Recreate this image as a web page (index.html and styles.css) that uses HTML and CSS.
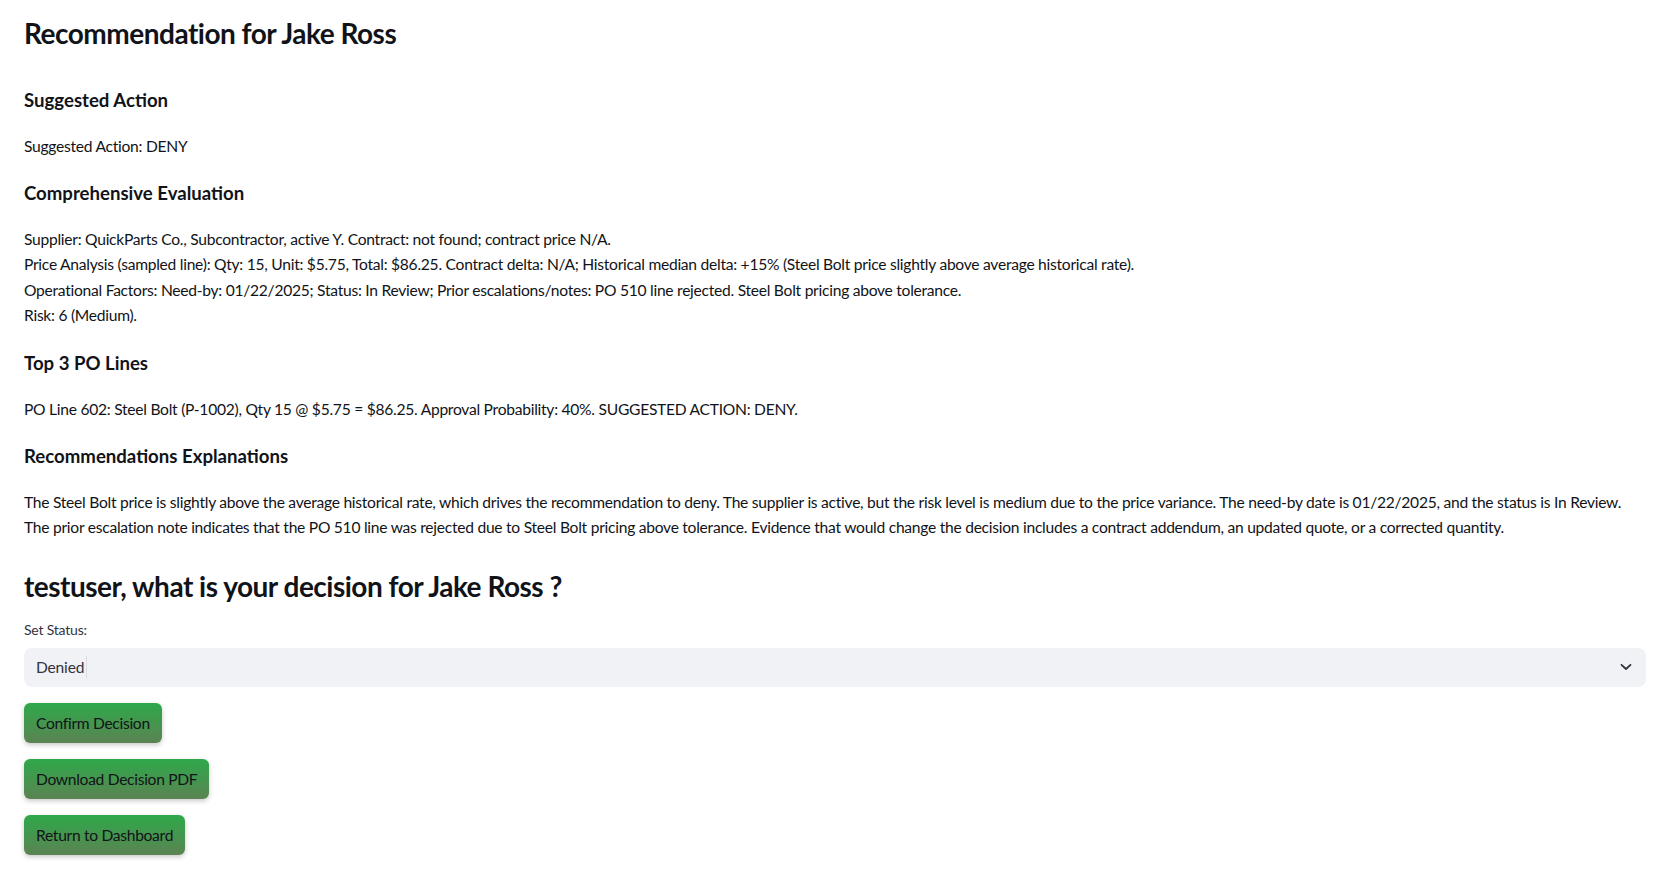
FILE: index.html
```html
<!DOCTYPE html>
<html lang="en">
<head>
<meta charset="utf-8">
<title>Recommendation for Jake Ross</title>
<link rel="stylesheet" href="styles.css">
</head>
<body>
<main class="page">
  <h2 class="title">Recommendation for Jake Ross</h2>

  <h4 class="sub sub-first">Suggested Action</h4>
  <p class="para">Suggested Action: DENY</p>

  <h4 class="sub">Comprehensive Evaluation</h4>
  <p class="para">Supplier: QuickParts Co., Subcontractor, active Y. Contract: not found; contract price N/A.<br>
  Price Analysis (sampled line): Qty: 15, Unit: $5.75, Total: $86.25. Contract delta: N/A; Historical median delta: +15% (Steel Bolt price slightly above average historical rate).<br>
  Operational Factors: Need-by: 01/22/2025; Status: In Review; Prior escalations/notes: PO 510 line rejected. Steel Bolt pricing above tolerance.<br>
  Risk: 6 (Medium).</p>

  <h4 class="sub">Top 3 PO Lines</h4>
  <p class="para">PO Line 602: Steel Bolt (P-1002), Qty 15 @ $5.75 = $86.25. Approval Probability: 40%. SUGGESTED ACTION: DENY.</p>

  <h4 class="sub">Recommendations Explanations</h4>
  <p class="para">The Steel Bolt price is slightly above the average historical rate, which drives the recommendation to deny. The supplier is active, but the risk level is medium due to the price variance. The need-by date is 01/22/2025, and the status is In Review.<br>
  The prior escalation note indicates that the PO 510 line was rejected due to Steel Bolt pricing above tolerance. Evidence that would change the decision includes a contract addendum, an updated quote, or a corrected quantity.</p>

  <h2 class="title decision">testuser, what is your decision for Jake Ross ?</h2>

  <label class="field-label">Set Status:</label>
  <div class="select">
    <span class="select-value">Denied</span><span class="caret"></span>
    <svg class="chevron" width="12" height="8" viewBox="0 0 12 8" aria-hidden="true">
      <path d="M1.5 1.8 L6 6 L10.5 1.8" fill="none" stroke="#31333f" stroke-width="1.8" stroke-linecap="round" stroke-linejoin="round"/>
    </svg>
  </div>

  <div class="actions">
    <button class="btn">Confirm Decision</button>
    <button class="btn">Download Decision PDF</button>
    <button class="btn">Return to Dashboard</button>
  </div>
</main>
</body>
</html>
```

FILE: styles.css
```css
html, body {
  margin: 0;
  padding: 0;
  background: #ffffff;
}

body {
  font-family: "Lato", "Source Sans Pro", "Noto Sans", sans-serif;
  color: #111318;
}

.page {
  padding: 13px 34px 20px 24px;
  display: flex;
  flex-direction: column;
  align-items: stretch;
}

.title {
  margin: 0;
  font-size: 28px;
  font-weight: 700;
  line-height: 40px;
  letter-spacing: -0.5px;
}

.sub {
  margin: 19.5px 0 20px 0;
  font-size: 18.6px;
  font-weight: 700;
  line-height: 28px;
}

.sub-first {
  margin-top: 32.6px;
}

.para {
  margin: 0;
  font-size: 15.6px;
  line-height: 25.6px;
  letter-spacing: -0.26px;
  white-space: nowrap;
}

.decision {
  margin-top: 25px;
}

.field-label {
  margin-top: 14px;
  font-size: 14px;
  line-height: 20px;
  letter-spacing: -0.2px;
  color: #31333f;
}

.select {
  margin-top: 8px;
  height: 39px;
  background: #f0f2f6;
  border-radius: 8px;
  display: flex;
  align-items: center;
  padding: 0 14px 0 12px;
}

.select-value {
  font-size: 15.6px;
  letter-spacing: -0.2px;
  color: #31333f;
}

.caret {
  width: 1px;
  height: 22px;
  background: #dcdde2;
  margin-left: 2px;
}

.chevron {
  margin-left: auto;
}

.actions {
  margin-top: 16px;
  display: flex;
  flex-direction: column;
  align-items: flex-start;
  gap: 16px;
}

.btn {
  height: 40px;
  padding: 0 12px;
  border: none;
  border-radius: 6px;
  background: linear-gradient(180deg, #2ea84a 0%, #44964e 50%, #5b8352 100%);
  box-shadow: 0 2px 5px rgba(0, 0, 0, 0.22);
  font-family: inherit;
  font-size: 15.6px;
  letter-spacing: -0.3px;
  color: #111318;
  cursor: pointer;
}
```
